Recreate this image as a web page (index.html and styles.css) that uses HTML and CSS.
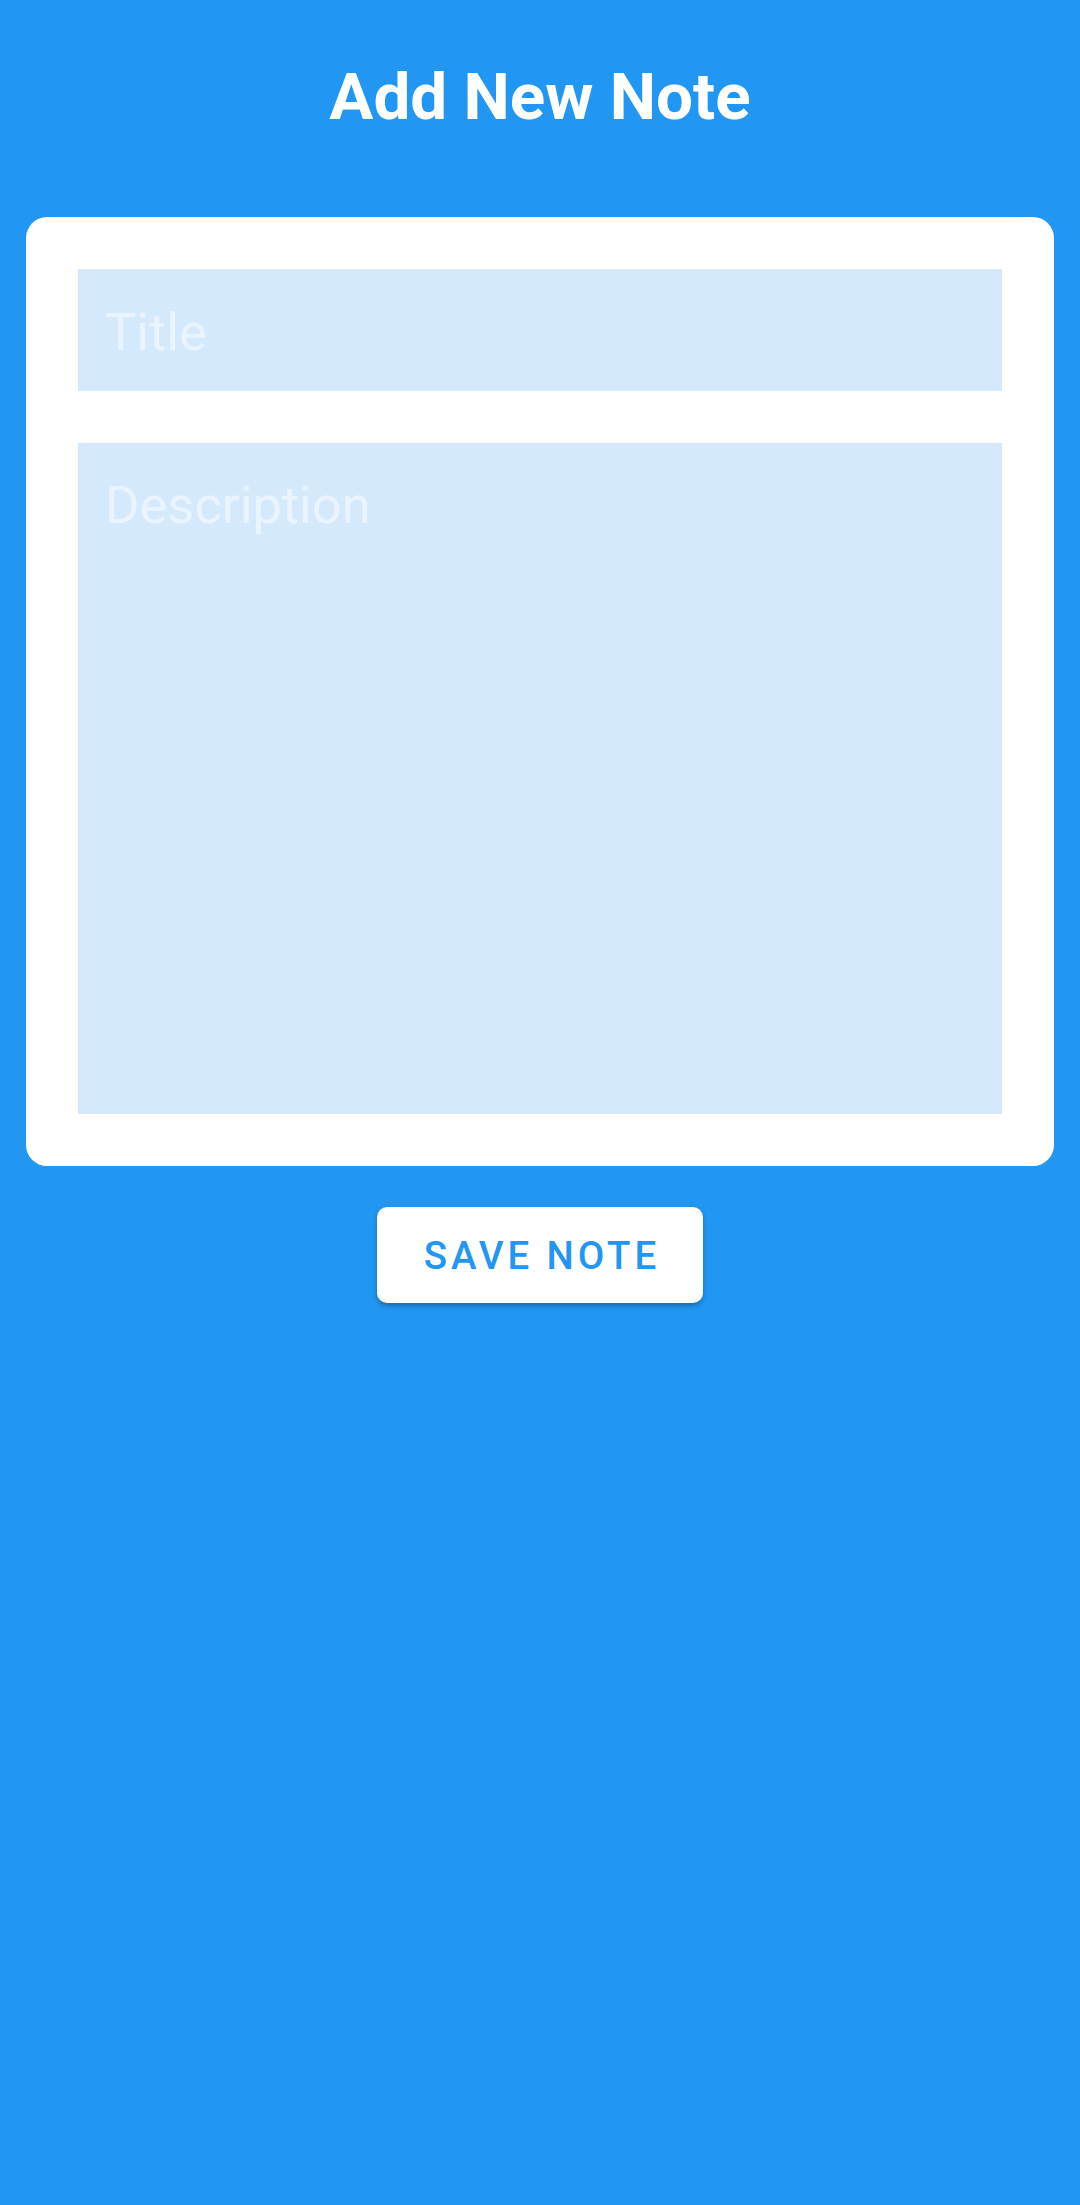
FILE: index.html
```html
<!DOCTYPE html>
<html lang="en">
<head>
<meta charset="utf-8">
<title>Add New Note</title>
<link rel="stylesheet" href="styles.css">
</head>
<body>
<main class="screen">
  <h1 class="heading">Add New Note</h1>
  <section class="card">
    <input class="field field-title" type="text" placeholder="Title">
    <textarea class="field field-desc" placeholder="Description"></textarea>
  </section>
  <button class="save-btn" type="button">SAVE NOTE</button>
</main>
</body>
</html>
```

FILE: styles.css
```css
* { box-sizing: border-box; }
html, body {
  margin: 0;
  padding: 0;
  background: #2196F3;
}
body {
  font-family: Roboto, "Noto Sans", "Liberation Sans", sans-serif;
  width: 1080px;
  min-height: 2205px;
}
.screen {
  display: flex;
  flex-direction: column;
  align-items: center;
}
.heading {
  margin: 58px 0 0;
  font-size: 65.6px;
  font-weight: 700;
  line-height: 77px;
  color: #ffffff;
  text-align: center;
}
.card {
  margin-top: 82px;
  width: 1028px;
  background: #ffffff;
  border-radius: 21px;
  padding: 52px;
  display: flex;
  flex-direction: column;
  gap: 52px;
}
.field {
  display: block;
  width: 100%;
  border: none;
  outline: none;
  background: #D5E9FC;
  font-family: Roboto, "Noto Sans", "Liberation Sans", sans-serif;
  font-size: 52.5px;
  line-height: 61.5px;
  color: #1a1a1a;
  margin: 0;
  border-radius: 0;
  resize: none;
}
.field::placeholder {
  color: #E9F4FE;
  opacity: 1;
}
.field-title {
  height: 122px;
  padding: 4px 27px 0;
}
.field-desc {
  height: 671px;
  padding: 32px 27px 0;
}
.save-btn {
  margin-top: 41px;
  width: 326px;
  height: 96px;
  border: none;
  border-radius: 10px;
  background: #ffffff;
  color: #2196F3;
  font-family: Roboto, "Noto Sans", "Liberation Sans", sans-serif;
  font-size: 38.5px;
  font-weight: 500;
  letter-spacing: 0.1em;
  padding: 0 0 0 0.1em;
  box-shadow: 0 3px 5px rgba(0, 0, 0, 0.28);
  cursor: pointer;
}
```
